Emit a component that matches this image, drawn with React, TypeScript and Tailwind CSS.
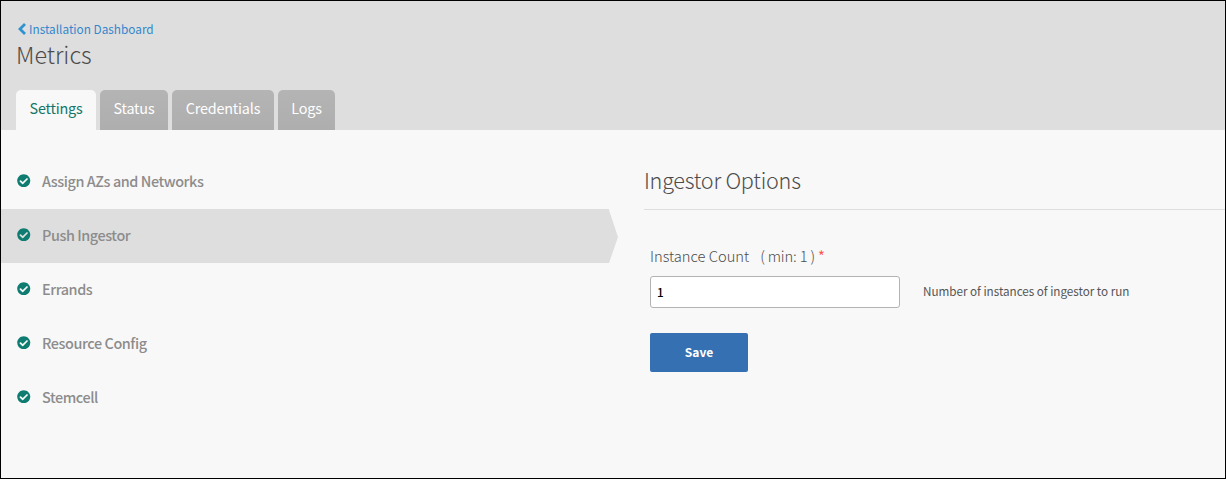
import { FaCheckCircle } from "react-icons/fa";

const tabs = [
  { label: "Settings", width: "w-20", active: true },
  { label: "Status", width: "w-[68px]", active: false },
  { label: "Credentials", width: "w-[102px]", active: false },
  { label: "Logs", width: "w-[57px]", active: false },
];

const steps = [
  { label: "Assign AZs and Networks", active: false },
  { label: "Push Ingestor", active: true },
  { label: "Errands", active: false },
  { label: "Resource Config", active: false },
  { label: "Stemcell", active: false },
];

function Header() {
  return (
    <header className="flex h-[129px] flex-col bg-[#dedede] pl-[15px] pt-[19px]">
      <a href="#" className="flex h-[18px] items-center gap-[3px] self-start pl-0.5 text-[11.8px] leading-[18px] text-[#3387cc]">
        <svg width="8" height="12" viewBox="0 0 8 12" fill="none" stroke="#2f93d2" strokeWidth="2.8">
          <path d="M7 1 2 6l5 5" />
        </svg>
        <span>Installation Dashboard</span>
      </a>
      <h1 className="h-[52px] text-[23.4px] font-light leading-[32px] text-[#4c4c4c]">Metrics</h1>
      <nav className="flex gap-1">
        {tabs.map((t) => (
          <a
            key={t.label}
            href="#"
            className={`flex h-10 justify-center rounded-t-[5px] text-[14.4px] leading-[36px] tracking-[-0.2px] ${t.width} ${
              t.active ? "bg-[#f8f8f8] text-[#12766a]" : "bg-linear-to-b from-[#b4b4b4] to-[#aeaeae] text-white"
            }`}
          >
            {t.label}
          </a>
        ))}
      </nav>
    </header>
  );
}

function Steps() {
  return (
    <ul className="w-[617px] pt-[25px]">
      {steps.map((s) => (
        <li key={s.label} className="flex h-[54px]">
          <div className={`flex w-[608px] items-center pl-4 text-[14.4px] font-medium tracking-[-0.42px] text-[#8c8c8c] ${s.active ? "bg-[#dedede]" : ""}`}>
            <FaCheckCircle className="mb-[3px] size-[13.5px] text-[#0e7c70]" />
            <span className="mb-0.5 ml-[11.5px] leading-5">{s.label}</span>
          </div>
          {s.active && (
            <svg width="9" height="54" viewBox="0 0 9 54" fill="#dedede">
              <path d="M0 1 9 28 0 54Z" />
            </svg>
          )}
        </li>
      ))}
    </ul>
  );
}

function Options() {
  return (
    <section className="flex-1 pl-[26px]">
      <h2 className="h-20 border-b border-[#dedede] pt-[34px] text-[21.6px] font-light leading-8 tracking-[-0.25px] text-[#4c4c4c]">Ingestor Options</h2>
      <form className="pl-1.5 pt-[35px]">
        <label className="flex h-[31px] text-[14.7px] font-light leading-[22px] text-[#4c4c4c]">
          <span>Instance Count</span>
          <span className="ml-[11px] tracking-[-0.15px]">( min: 1 )</span>
          <span className="ml-[3px] font-normal text-[#ff5348]">*</span>
        </label>
        <div className="flex items-center">
          <input
            defaultValue="1"
            className="h-8 w-[250px] rounded-[3px] border border-[#b3b3b3] bg-white px-1.5 pb-0.5 text-[11.7px] font-medium text-black"
          />
          <span className="mb-0.5 ml-[23px] text-[11.7px] tracking-[-0.03px] text-[#555555]">Number of instances of ingestor to run</span>
        </div>
        <button type="button" className="mt-[25px] block h-[39px] w-[98px] rounded-xs bg-[#3571b2] pb-0.5 text-[12px] font-bold text-white">
          Save
        </button>
      </form>
    </section>
  );
}

export default function App() {
  return (
    <div className="h-[479px] w-[1226px] overflow-hidden border border-black bg-[#f8f8f8] font-['Noto_Sans_CJK_SC','Noto_Sans',sans-serif]">
      <Header />
      <main className="flex">
        <Steps />
        <Options />
      </main>
    </div>
  );
}
